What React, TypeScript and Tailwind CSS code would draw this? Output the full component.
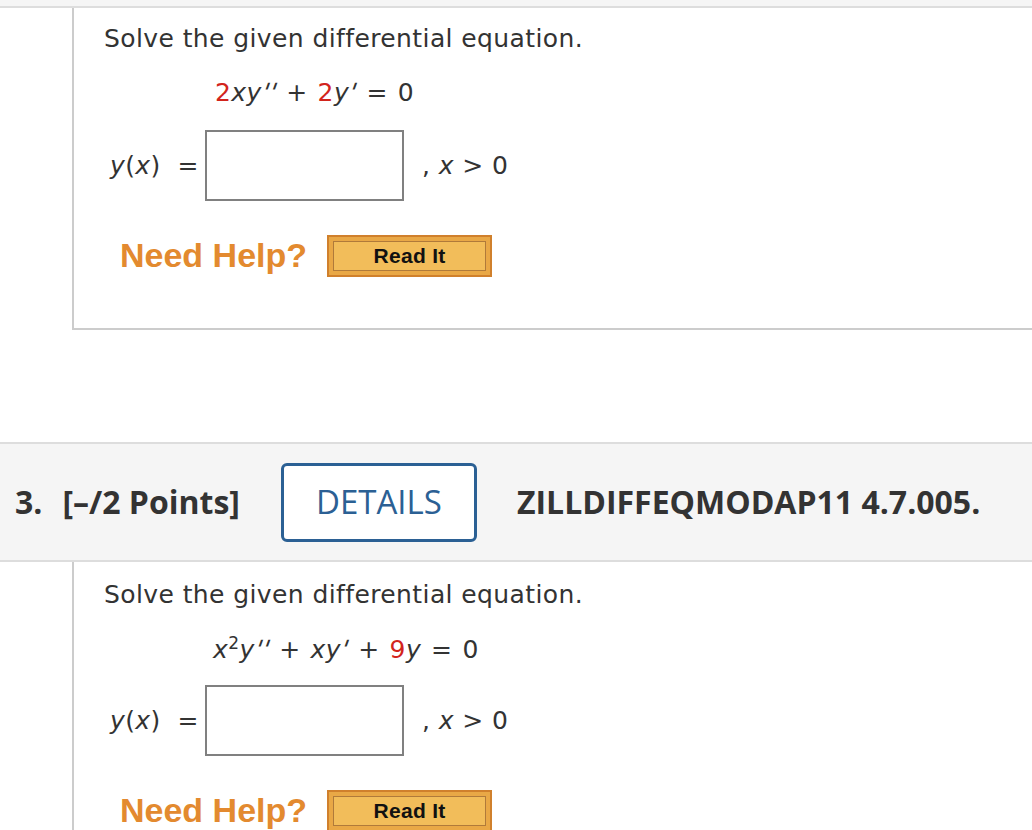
import React from "react";

const verdana = { fontFamily: "Verdana, 'DejaVu Sans', sans-serif" };
const arial = { fontFamily: "'Liberation Sans', Arial, sans-serif" };
const osans = { fontFamily: "'Open Sans', sans-serif" };

function Op({ c }: { c: string }) {
  return <span className="mx-[10px]">{c}</span>;
}

function Pr({ n }: { n: number }) {
  return <span className="inline-block -skew-x-[20deg] not-italic">{n === 2 ? "''" : "'"}</span>;
}

function ReadIt() {
  return (
    <div className="w-[165px] h-[42px] border-2 border-[#d0802c] bg-[#e9a846] p-[4px] flex">
      <div
        className="flex-1 border border-[#b07a3a] bg-[#f2bd5a] flex items-center justify-center text-[21px] font-bold text-[#111] tracking-[0.3px]"
        style={arial}
      >
        Read It
      </div>
    </div>
  );
}

function Answer({ label }: { label: React.ReactNode }) {
  return (
    <div className="flex items-center text-[25px] tracking-[0.4px] text-[#333]" style={verdana}>
      <span className="w-[101px] pl-[6px]">{label}</span>
      <div className="w-[199px] h-[71px] border-2 border-[#808080] bg-white" />
      <span className="ml-[18px]">
        , <i>x</i> &gt; 0
      </span>
    </div>
  );
}

function NeedHelp() {
  return (
    <div className="flex items-center gap-[20px] pl-[16px]">
      <span className="text-[34px] font-bold text-[#e38a2f]" style={arial}>
        Need Help?
      </span>
      <ReadIt />
    </div>
  );
}

export default function App() {
  return (
    <div className="w-[1032px] h-[830px] overflow-hidden bg-white text-[#333]">
      <div className="h-[8px] bg-[#f5f5f5] border-b-2 border-[#dddddd]" />
      {/* Panel 1 */}
      <div className="ml-[72px] h-[322px] border-l-2 border-b-2 border-[#cccccc] pl-[30px] pt-[12px]">
        <div className="text-[25px] tracking-[0.4px] text-[#333]" style={verdana}>
          Solve the given differential equation.
        </div>
        <div className="mt-[16px] pl-[111px] text-[25px] tracking-[0.4px]" style={verdana}>
          <span className="text-[#d2241c]">2</span>
          <i>xy</i>
          <Pr n={2} />
          <Op c="+" />
          <span className="text-[#d2241c]">2</span>
          <i>y</i>
          <Pr n={1} />
          <Op c="=" />
          0
        </div>
        <div className="mt-[19px]">
          <Answer label={<><i>y</i>(<i>x</i>) &nbsp;=</>} />
        </div>
        <div className="mt-[29px]">
          <NeedHelp />
        </div>
      </div>
      <div className="h-[112px]" />
      {/* Header */}
      <div className="h-[120px] bg-[#f5f5f5] border-t-2 border-b-2 border-[#dddddd] flex items-center pl-[15px]">
        <span className="text-[32px] font-bold text-[#333]" style={osans}>
          3.
        </span>
        <span className="ml-[20px] text-[32px] font-bold text-[#333]" style={osans}>
          [–/2 Points]
        </span>
        <div className="ml-[41px] w-[196px] h-[79px] border-[3px] border-[#2b6094] rounded-[6px] bg-white flex items-center justify-center">
          <span className="text-[33px] text-[#2b6094]" style={osans}>
            DETAILS
          </span>
        </div>
        <span className="ml-[40px] text-[32px] font-bold text-[#333]" style={osans}>
          ZILLDIFFEQMODAP11 4.7.005.
        </span>
      </div>
      {/* Panel 2 */}
      <div className="ml-[72px] h-[300px] border-l-2 border-[#cccccc] pl-[30px] pt-[14px]">
        <div className="text-[25px] tracking-[0.4px]" style={verdana}>
          Solve the given differential equation.
        </div>
        <div className="mt-[17px] pl-[109px] text-[25px] tracking-[0.4px]" style={verdana}>
          <i>x</i>
          <sup className="text-[17px]">2</sup>
          <i>y</i>
          <Pr n={2} />
          <Op c="+" />
          <i>xy</i>
          <Pr n={1} />
          <Op c="+" />
          <span className="text-[#d2241c]">9</span>
          <i>y</i>
          <Op c="=" />
          0
        </div>
        <div className="mt-[17px]">
          <Answer label={<><i>y</i>(<i>x</i>) &nbsp;=</>} />
        </div>
        <div className="mt-[29px]">
          <NeedHelp />
        </div>
      </div>
    </div>
  );
}
